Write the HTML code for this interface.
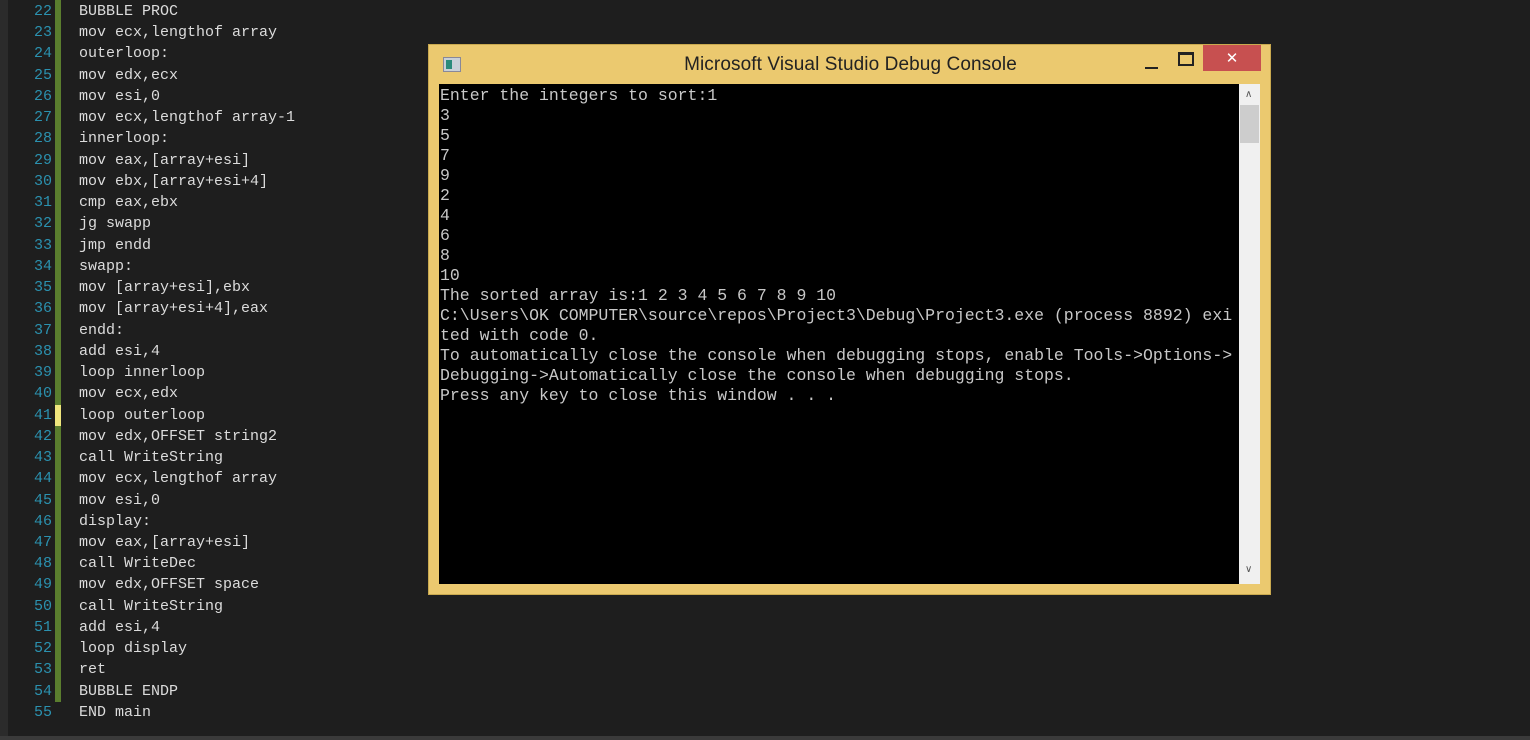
<!DOCTYPE html>
<html><head><style>
body{margin:0;width:1530px;height:740px;background:#1e1e1e;overflow:hidden;position:relative;font-family:"Liberation Mono",monospace}
.strip{position:absolute;left:0;top:0;width:8px;height:740px;background:#2b2b2b}
.ln{position:absolute;left:0;width:52px;text-align:right;color:#2b91af;font-size:15px;font-family:"Liberation Mono",monospace}
.code{position:absolute;left:79px;color:#dcdcdc;font-size:15px;white-space:pre}
.green{position:absolute;left:55px;width:6px;top:0;height:702px;background:#5a7d2e}
.yel{position:absolute;left:55px;width:6px;top:405px;height:21px;background:#efe67d}
.bottom{position:absolute;left:0;top:736px;width:1530px;height:4px;background:#3a3a3a}
.win{position:absolute;left:428px;top:44px;width:843px;height:551px;background:#ebc96f;box-sizing:border-box;border:1px solid #c9a94f}
.title{position:absolute;left:0;width:843px;top:9px;text-align:center;font-family:"Liberation Sans",sans-serif;font-size:19px;color:#222;letter-spacing:0.1px}
.con{position:absolute;left:439px;top:84px;width:800px;height:500px;background:#000}
.con pre{margin:0;padding:2px 0 0 1px;color:#c8c8c8;font-family:"Liberation Mono",monospace;font-size:16.5px;line-height:20px}
.sb{position:absolute;left:1239px;top:84px;width:21px;height:500px;background:#f0f0f0}
.thumb{position:absolute;left:1px;top:21px;width:19px;height:38px;background:#cdcdcd}
.close{position:absolute;left:1203px;top:45px;width:58px;height:26px;background:#c75050;color:#fff;text-align:center;font:15px "DejaVu Sans",sans-serif;line-height:26px}
</style></head><body>
<div class="strip"></div>
<div class="green"></div><div class="yel"></div>
<div id="lines"></div>
<div class="bottom"></div>
<div class="win">
<div style="position:absolute;left:14px;top:12px;width:16px;height:13px;background:#c8d0d8;border:1px solid #889"></div>
<div style="position:absolute;left:17px;top:15px;width:6px;height:9px;background:#2a8a7a"></div>
<div class="title">Microsoft Visual Studio Debug Console</div>
<div style="position:absolute;left:716px;top:22px;width:13px;height:2px;background:#222"></div>
<div style="position:absolute;left:749px;top:7px;width:12px;height:9px;border:2px solid #222;border-top-width:3px"></div>
</div>
<div class="close">✕</div>
<div class="con"><pre>Enter the integers to sort:1
3
5
7
9
2
4
6
8
10
The sorted array is:1 2 3 4 5 6 7 8 9 10
C:\Users\OK COMPUTER\source\repos\Project3\Debug\Project3.exe (process 8892) exi
ted with code 0.
To automatically close the console when debugging stops, enable Tools->Options->
Debugging->Automatically close the console when debugging stops.
Press any key to close this window . . .</pre></div>
<div class="sb"><div style="position:absolute;left:6px;top:5px;font:10px 'DejaVu Sans';color:#555">&#x2227;</div><div class="thumb"></div><div style="position:absolute;left:6px;top:480px;font:10px 'DejaVu Sans';color:#555">&#x2228;</div></div>
<script>
var c=["BUBBLE PROC","mov ecx,lengthof array","outerloop:","mov edx,ecx","mov esi,0","mov ecx,lengthof array-1","innerloop:","mov eax,[array+esi]","mov ebx,[array+esi+4]","cmp eax,ebx","jg swapp","jmp endd","swapp:","mov [array+esi],ebx","mov [array+esi+4],eax","endd:","add esi,4","loop innerloop","mov ecx,edx","loop outerloop","mov edx,OFFSET string2","call WriteString","mov ecx,lengthof array","mov esi,0","display:","mov eax,[array+esi]","call WriteDec","mov edx,OFFSET space","call WriteString","add esi,4","loop display","ret","BUBBLE ENDP","END main"];
var h="";for(var i=0;i<c.length;i++){var t=3+i*21.24;h+='<div class="ln" style="top:'+t+'px">'+(22+i)+'</div><div class="code" style="top:'+t+'px">'+c[i]+'</div>';}
document.getElementById("lines").innerHTML=h;
</script>
</body></html>
